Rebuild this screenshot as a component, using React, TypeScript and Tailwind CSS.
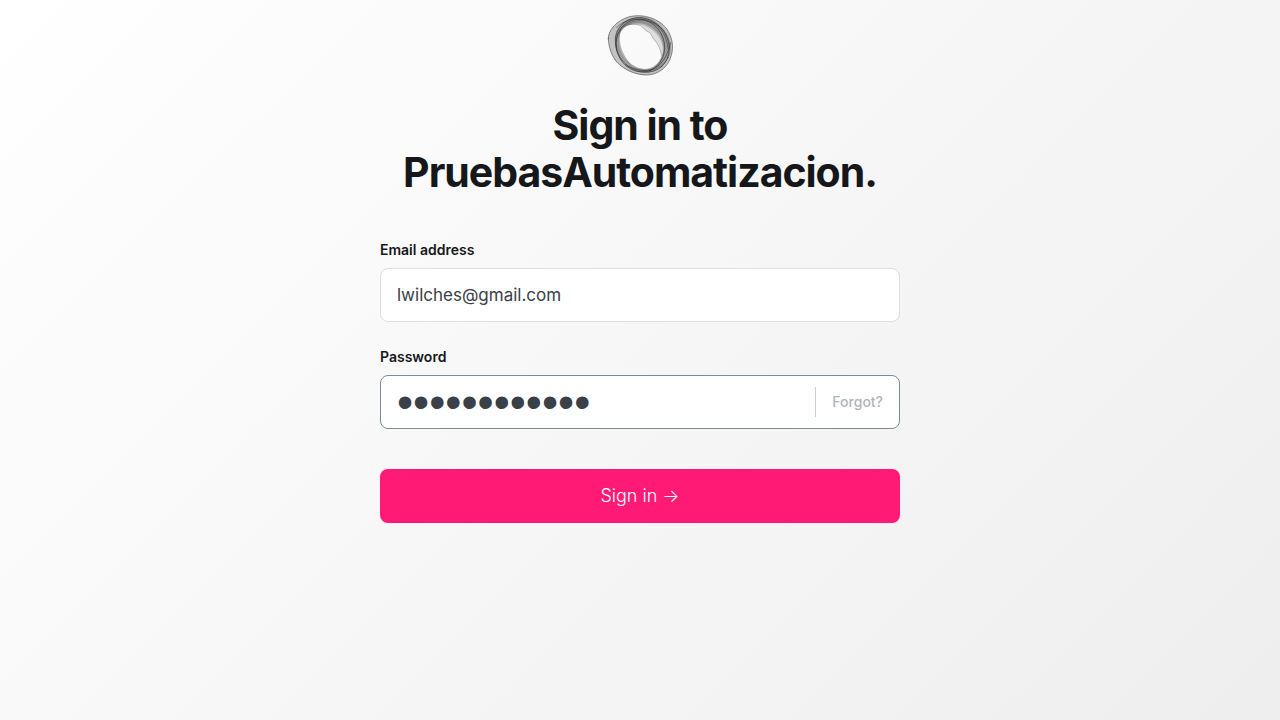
function Logo() {
  return (
    <svg className="h-[61px] w-[66px]" viewBox="21 21 198 183" fill="none" aria-hidden="true">
      <path
        fill="#777"
        fillOpacity="0.42"
        fillRule="evenodd"
        d="M25 92C24 68 48 38 88 26C132 16 176 32 200 62C216 86 222 114 214 142C206 176 176 200 141 201C110 201 76 188 52 164C34 144 26 116 25 92ZM60 76C52 104 62 140 84 162C106 182 138 188 160 178C180 166 190 142 188 118C184 88 160 62 130 52C100 44 72 52 60 76Z"
      />
      <path
        fill="#999"
        fillOpacity="0.28"
        d="M62 62C75 48 105 45 122 53C132 58 132 67 144 71C156 76 152 84 163 96C174 108 182 124 184 142C198 112 186 80 168 60C142 32 90 30 62 62Z"
      />
      <path
        fill="#333"
        fillOpacity="0.28"
        fillRule="evenodd"
        d="M44 92C46 56 78 28 122 26C168 28 206 66 210 110C212 154 182 192 142 193C92 190 48 146 44 92ZM57 96C60 140 90 178 132 183C168 184 190 150 190 118C188 78 156 50 118 46C80 44 58 64 57 96Z"
      />
      <g stroke="#222" strokeLinecap="round" strokeLinejoin="round">
        <path strokeOpacity="0.6" strokeWidth="2.5" d="M25 92C24 68 48 38 88 26C132 16 176 32 200 62C216 86 222 114 214 142C206 176 176 200 141 201C110 201 76 188 52 164C34 144 26 116 25 92Z" />
        <ellipse cx="127" cy="111" rx="87" ry="76" transform="rotate(48 127 111)" strokeOpacity="0.65" strokeWidth="2.5" />
        <ellipse cx="121" cy="113" rx="80" ry="72" transform="rotate(70 121 113)" strokeOpacity="0.65" strokeWidth="2.5" />
        <ellipse cx="130" cy="113" rx="83" ry="74" transform="rotate(25 130 113)" strokeOpacity="0.4" strokeWidth="2" />
        <path strokeOpacity="0.45" strokeWidth="3" d="M50 58C78 30 122 26 156 42C186 58 202 90 204 122" />
        <path strokeOpacity="0.45" strokeWidth="2" d="M62 64C50 90 62 136 88 166" />
        <path strokeOpacity="0.4" strokeWidth="2" d="M62 62C75 48 105 45 122 53C132 58 132 67 144 71C156 76 152 84 163 96C174 108 184 126 184 144" />
        <path strokeOpacity="0.5" strokeWidth="3" d="M76 170C106 190 146 194 172 176C194 158 204 136 212 104" />
      </g>
    </svg>
  )
}

export default function App() {
  return (
    <div className="flex min-h-screen flex-col items-center bg-linear-[135deg] from-white to-[#eeeeee] font-['Inter',sans-serif] text-[#15171a]">
      <main className="flex w-full max-w-[520px] flex-col items-center pt-[15px]">
        <Logo />
        <h1 className="mt-[26px] text-center text-[41px] leading-[47px] font-bold tracking-tight">
          Sign in to PruebasAutomatizacion.
        </h1>
        <form className="mt-[43px] flex w-full flex-col" onSubmit={(e) => e.preventDefault()}>
          <label htmlFor="email" className="text-sm leading-[21px] font-semibold">
            Email address
          </label>
          <input
            id="email"
            type="email"
            defaultValue="lwilches@gmail.com"
            className="mt-2 h-[54px] rounded-lg border border-[#dddee0] bg-white px-4 text-[17px] text-[#394047] outline-none"
          />
          <label htmlFor="password" className="mt-6 text-sm leading-[21px] font-semibold">
            Password
          </label>
          <div className="mt-2 flex h-[54px] items-center rounded-lg border border-[#7c8b9a] bg-white">
            <input
              id="password"
              type="password"
              defaultValue="abcdefghijkl"
              className="h-full min-w-0 flex-1 px-4 font-['Liberation_Sans',sans-serif] text-[46px] text-[#394047] outline-none"
            />
            <button type="button" className="h-[30px] border-l border-[#c8ced3] px-4 text-sm font-medium text-[#abb4be]">
              Forgot?
            </button>
          </div>
          <button type="submit" className="mt-10 h-[54px] rounded-lg bg-[#ff1a75] text-lg font-light text-white">
            Sign in →
          </button>
        </form>
      </main>
    </div>
  )
}
